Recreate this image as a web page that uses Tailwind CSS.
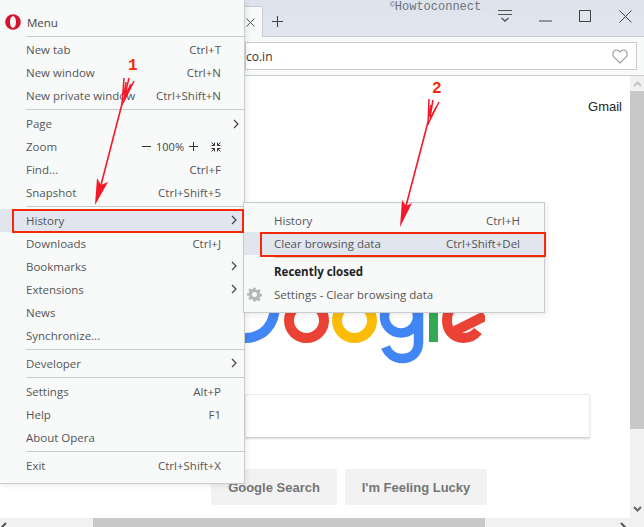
<!DOCTYPE html>
<html>
<head>
<meta charset="utf-8">
<script src="https://cdn.jsdelivr.net/npm/@tailwindcss/browser@4"></script>
</head>
<body class="m-0 overflow-hidden bg-white">
<div class="relative w-[644px] h-[527px] overflow-hidden flex flex-col bg-white font-['Open_Sans',sans-serif]">

  <!-- title bar -->
  <header class="h-[37px] shrink-0 flex items-stretch bg-gradient-to-b from-[#dde3ec] to-[#e2e7ef] border-b border-[#c9ced6]">
    <div class="ml-[245px] w-[18px] mt-[6px] -mb-px bg-[#f8faf9] border-r border-t border-[#c8cccc] rounded-tr-[2px] flex items-center">
      <svg class="ml-[1px] mt-[1px]" width="9" height="9" viewBox="0 0 9 9" fill="none" stroke="#555" stroke-width="1"><path d="M0.5 0.5l8 8M8.500 .5l-8 8"/></svg>
    </div>
    <div class="ml-[9px] mt-[16px]">
      <svg width="11" height="11" viewBox="0 0 11 11" fill="none" stroke="#444" stroke-width="1.100"><path d="M5.500 0v11M0 5.500h11"/></svg>
    </div>
    <div class="ml-[107px] w-[92px] mt-[-2px] font-['Liberation_Mono',monospace] text-[12px] leading-[14px] text-[#6f747a] whitespace-nowrap"><span class="text-[8px] align-[3px]">©</span>Howtoconnect</div>
    <div class="ml-[15px] mt-[10px]">
      <svg width="16" height="13" viewBox="0 0 16 13" fill="none" stroke="#555"><path d="M1 .5h14M1 4.500h14" /><path d="M4.500 8l3.500 3 3.500-3" stroke-width="1.400"/></svg>
    </div>
    <div class="ml-[26px] mt-[20px]">
      <svg width="13" height="2" viewBox="0 0 13 2" fill="none" stroke="#444"><path d="M0 1h13"/></svg>
    </div>
    <div class="ml-[27px] mt-[10px]">
      <svg width="13" height="13" viewBox="0 0 13 13" fill="none" stroke="#444"><rect x=".5" y=".5" width="11" height="11"/></svg>
    </div>
    <div class="ml-[27px] mt-[10px]">
      <svg width="13" height="13" viewBox="0 0 13 13" fill="none" stroke="#444"><path d="M.5 .5l12 12M12.500 .5l-12 12"/></svg>
    </div>
  </header>

  <!-- address bar -->
  <div class="h-[39px] shrink-0 bg-[#f8faf9] border-b border-[#c8cccc] pt-[5px] pr-[7px] pl-[245px]">
    <div class="h-[28px] bg-white border border-[#c8cccc] flex items-center justify-between pr-[8px] pl-0">
      <span class="text-[12px] mt-[1px] text-[#333]">co.in</span>
      <svg width="16" height="15" viewBox="0 0 16 15" fill="none" stroke="#9a9a9a" stroke-width="1.100"><path d="M8 14L2 8.200C-.2 6 1 1 4.500 1 6.300 1 7.400 2 8 3c.6-1 1.700-2 3.500-2C15 1 16.200 6 14 8.200z"/></svg>
    </div>
  </div>

  <!-- page -->
  <div class="flex-1 flex min-h-0">
    <main class="flex-1 relative flex flex-col">
      <div class="pt-[23px] pr-[8px] text-right font-['Liberation_Sans',sans-serif] text-[13px] leading-[16px] text-[#222]">Gmail</div>
      <svg class="block ml-[245px] mt-[190px]" width="240" height="60" viewBox="245 305 240 60" fill="none" stroke-width="10">
        <path d="M275 305C275 325 263 338 245 338" stroke="#4285f4"/>
        <circle cx="306.500" cy="320.500" r="17.500" stroke="#ea4335"/>
        <circle cx="354.500" cy="320.500" r="17.500" stroke="#fbbc05"/>
        <circle cx="401" cy="316.500" r="16.500" stroke="#4285f4" stroke-width="9.500"/>
        <path d="M418.500 305V342C418.500 353 411 358.500 402 358.500C394 358.500 388 353 385.500 347" stroke="#4285f4" stroke-width="9.500"/>
        <path d="M433.500 305V342" stroke="#34a853" stroke-width="9"/>
        <path d="M478 331C474 336 469 338 463.500 338C453 338 447 330 447 320.500C447 312 452 305 460 303" stroke="#ea4335" stroke-width="10"/>
        <path d="M455 331L485 316" stroke="#ea4335" stroke-width="10"/>
      </svg>
      <div class="ml-[245px] mt-[29px] w-[345px] h-[44px] bg-white border border-[#ececec] border-b-[#d0d0d0] shadow-[0_1px_2px_rgba(0,0,0,0.15)]"></div>
      <div class="ml-[211px] mt-[31px] flex gap-[8px] font-['Liberation_Sans',sans-serif] font-bold text-[13px] text-[#757575]">
        <div class="w-[126px] h-[36px] pt-[2px] rounded-[2px] bg-[#f2f2f2] flex items-center justify-center">Google Search</div>
        <div class="w-[142px] h-[36px] pt-[2px] rounded-[2px] bg-[#f2f2f2] flex items-center justify-center">I'm Feeling Lucky</div>
      </div>
    </main>
    <!-- vertical scrollbar -->
    <div class="w-[14px] shrink-0 bg-[#f1f1f1] flex flex-col items-center">
      <div class="h-[15px] flex items-center">
        <svg width="9" height="6" viewBox="0 0 9 6" fill="none" stroke="#c4c4c4" stroke-width="2"><path d="M1 5l3.500-3.500L8 5"/></svg>
      </div>
      <div class="w-full h-[338px] bg-[#c8c8c8]"></div>
      <div class="mt-[77px]">
        <svg width="9" height="6" viewBox="0 0 9 6" fill="none" stroke="#666" stroke-width="2"><path d="M1 1l3.500 3.500L8 1"/></svg>
      </div>
    </div>
  </div>

  <!-- horizontal scrollbar -->
  <div class="h-[9px] shrink-0 bg-[#f1f1f1] flex items-start overflow-hidden">
    <svg class="mt-[4px] ml-[1px]" width="6" height="9" viewBox="0 0 6 9" fill="none" stroke="#555" stroke-width="2"><path d="M5 1L1.500 4.500 5 8"/></svg>
    <div class="ml-[86px] w-[392px] h-full bg-[#c8c8c8]"></div>
    <svg class="mt-[4px] ml-[135px]" width="6" height="9" viewBox="0 0 6 9" fill="none" stroke="#555" stroke-width="2"><path d="M1 1l3.500 3.500L1 8"/></svg>
  </div>

  <!-- main menu -->
  <nav class="absolute left-0 top-0 w-[245px] h-[484px] bg-[#f8faf9] border-r border-b border-[#c8cccc] shadow-[2px_2px_5px_rgba(0,0,0,0.08)] text-[11.5px] leading-[23px] text-[#555]">
    <div class="h-[36px] flex items-center">
      <svg class="ml-[5px] mt-[8px]" width="16" height="16" viewBox="0 0 16 16"><path fill-rule="evenodd" fill="#d5132b" d="M8 0.200a7.800 7.800 0 1 0 0 15.600a7.800 7.800 0 1 0 0-15.600zM8 2.200c1.900 0 3 2.600 3 5.800s-1.100 5.800-3 5.800-3-2.600-3-5.800 1.100-5.800 3-5.800z"/></svg>
      <span class="ml-[6px] mt-[8px] text-[#444]">Menu</span>
    </div>
    <div class="ml-[26px] border-t border-[#c8cccc] pt-[1px] pb-[2px] pr-[23px]">
      <div class="flex justify-between"><span>New tab</span><span>Ctrl+T</span></div>
      <div class="flex justify-between"><span>New window</span><span>Ctrl+N</span></div>
      <div class="flex justify-between"><span>New private window</span><span>Ctrl+Shift+N</span></div>
    </div>
    <div class="ml-[26px] border-t border-[#c8cccc] pt-[2px] pb-[2px] pr-[23px]">
      <div class="relative">Page<svg class="absolute right-[-18px] top-[7px]" width="6" height="10" viewBox="0 0 6 10" fill="none" stroke="#444" stroke-width="1.200"><path d="M1 1l4 4-4 4"/></svg></div>
      <div class="flex justify-between items-center"><span>Zoom</span>
        <span class="flex items-center text-[#444]">
          <span class="w-[9px] h-[1px] bg-[#333] mr-[5px]"></span><span class="text-[11px]">100%</span>
          <svg class="ml-[5px]" width="9" height="9" viewBox="0 0 9 9" stroke="#333"><path d="M4.500 0v9M0 4.500h9"/></svg>
          <svg class="ml-[13px]" width="10" height="10" viewBox="0 0 10 10" fill="none" stroke="#333" stroke-width="1"><path d="M.5 .5L3 3M3.500 .5V3.500H.5M9.500 .5L7 3M6.500 .5V3.500H9.500M.5 9.500L3 7M3.500 9.500V6.500H.5M9.500 9.500L7 7M6.500 9.500V6.500H9.500"/></svg>
        </span>
      </div>
      <div class="flex justify-between"><span>Find...</span><span>Ctrl+F</span></div>
      <div class="flex justify-between"><span>Snapshot</span><span>Ctrl+Shift+5</span></div>
    </div>
    <div class="border-t border-transparent pt-[2px] pb-[2px] relative before:absolute before:left-[26px] before:right-0 before:top-[-1px] before:h-px before:bg-[#c8cccc]">
      <div class="relative h-[23px] bg-[#e0e5ee] pl-[26px]">History<svg class="absolute right-[7px] top-[6px]" width="6" height="10" viewBox="0 0 6 10" fill="none" stroke="#444" stroke-width="1.200"><path d="M1 1l4 4-4 4"/></svg></div>
      <div class="pl-[26px] pr-[23px] flex justify-between"><span>Downloads</span><span>Ctrl+J</span></div>
      <div class="pl-[26px] relative">Bookmarks<svg class="absolute right-[7px] top-[6px]" width="6" height="10" viewBox="0 0 6 10" fill="none" stroke="#444" stroke-width="1.200"><path d="M1 1l4 4-4 4"/></svg></div>
      <div class="pl-[26px] relative">Extensions<svg class="absolute right-[7px] top-[6px]" width="6" height="10" viewBox="0 0 6 10" fill="none" stroke="#444" stroke-width="1.200"><path d="M1 1l4 4-4 4"/></svg></div>
      <div class="pl-[26px]">News</div>
      <div class="pl-[26px]">Synchronize...</div>
    </div>
    <div class="ml-[26px] border-t border-[#c8cccc] pt-[2px] pb-[2px] relative">Developer<svg class="absolute right-[7px] top-[8px]" width="6" height="10" viewBox="0 0 6 10" fill="none" stroke="#444" stroke-width="1.200"><path d="M1 1l4 4-4 4"/></svg></div>
    <div class="ml-[26px] border-t border-[#c8cccc] pt-[2px] pb-[2px] pr-[23px]">
      <div class="flex justify-between"><span>Settings</span><span>Alt+P</span></div>
      <div class="flex justify-between"><span>Help</span><span>F1</span></div>
      <div>About Opera</div>
    </div>
    <div class="ml-[26px] border-t border-[#c8cccc] pt-[2px] pr-[23px] flex justify-between"><span>Exit</span><span>Ctrl+Shift+X</span></div>
  </nav>

  <!-- history submenu -->
  <div class="absolute left-[243px] top-[202px] w-[302px] h-[111px] bg-[#f8faf9] border border-[#c8cccc] shadow-[2px_2px_6px_rgba(0,0,0,0.08)] pt-[6px] text-[11.500px] leading-[23px] text-[#555]">
    <div class="flex justify-between pl-[30px] pr-[24px]"><span>History</span><span>Ctrl+H</span></div>
    <div class="flex justify-between pl-[30px] pr-[24px] bg-[#e0e5ee]"><span>Clear browsing data</span><span>Ctrl+Shift+Del</span></div>
    <div class="mt-[2px] ml-[30px] border-t border-[#c8cccc] pt-[2px]">
      <div class="font-bold text-[#222]">Recently closed</div>
      <div class="relative">
        <svg class="absolute left-[-27px] top-[4px]" width="15" height="15" viewBox="0 0 24 24" fill="#b5b8b8"><path fill-rule="evenodd" d="M10 1h4l.6 3.100 1.900.8 2.600-1.800 2.800 2.800-1.800 2.600.8 1.900 3.100.6v4l-3.100.6-.8 1.900 1.800 2.600-2.800 2.800-2.600-1.800-1.900.8L14 23h-4l-.6-3.100-1.900-.8-2.600 1.800-2.800-2.800 1.800-2.600-.8-1.900L0 14v-4l3.100-.6.8-1.900L2.100 4.900l2.800-2.800 2.600 1.800 1.900-.8zM12 8a4 4 0 1 0 0 8 4 4 0 0 0 0-8z"/></svg>
        Settings - Clear browsing data
      </div>
    </div>
  </div>

  <!-- annotations -->
  <div class="absolute left-[12px] top-[209px] w-[232px] h-[24px] border-2 border-[#f5290a]"></div>
  <div class="absolute left-[260px] top-[232px] w-[286px] h-[25px] border-2 border-[#f5290a]"></div>
  <span class="absolute left-[128px] top-[57px] font-['Liberation_Mono',monospace] font-bold text-[16px] leading-[18px] text-[#f5290a]">1</span>
  <span class="absolute left-[432px] top-[80px] font-['Liberation_Mono',monospace] font-bold text-[16px] leading-[18px] text-[#f5290a]">2</span>
  <svg class="absolute left-0 top-0" width="644" height="527" viewBox="0 0 644 527" fill="none" stroke="#f5182a">
    <path d="M123 100L101 185" stroke-width="1.600"/>
    <path d="M124 78L122 105M129 78L124 99M134 81L123 103M126 82L124 94M131 84L125 96" stroke-width="1.500"/>
    <path d="M95 205L97 178L101 185L108 182Z" fill="#f5182a" stroke="none"/>
    <path d="M428 122L406 206" stroke-width="1.600"/>
    <path d="M429 99L428 125M433 100L430 117M439 102L428 124M431 105L429 116M436 107L430 119" stroke-width="1.500"/>
    <path d="M400 227L402 200L406 206L412 203Z" fill="#f5182a" stroke="none"/>
  </svg>
</div>
</body>
</html>
